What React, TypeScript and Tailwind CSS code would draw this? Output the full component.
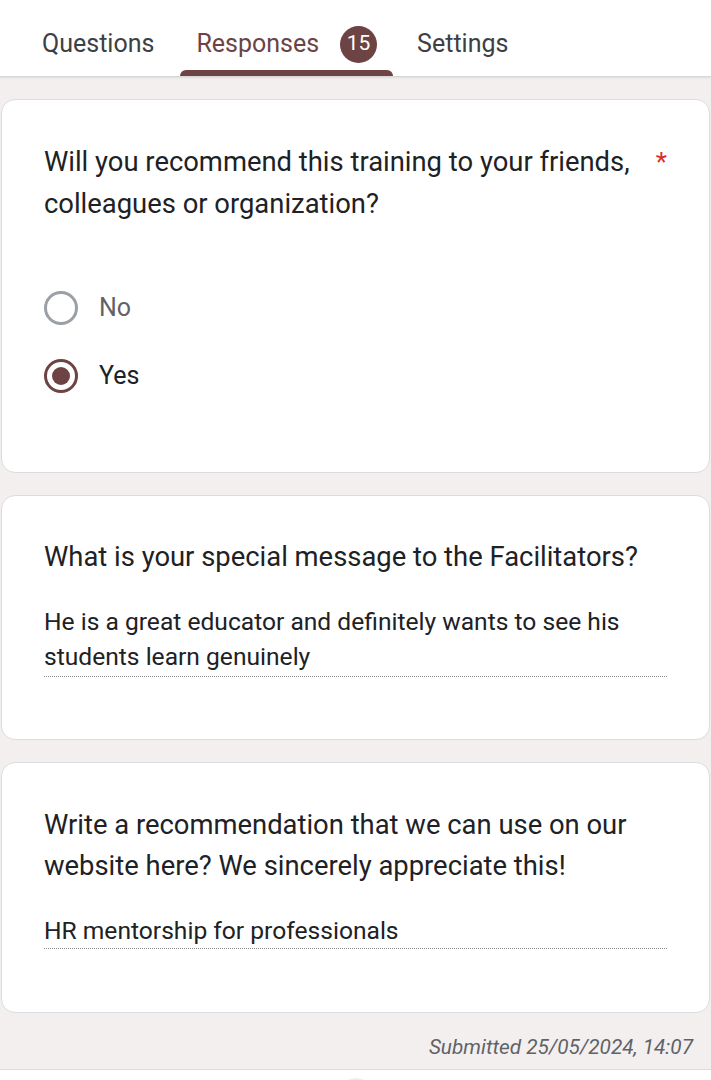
import React from "react";

const Radio = ({ label, checked }: { label: string; checked?: boolean }) => (
  <div className="flex items-center gap-[21px] h-[34px]">
    {checked ? (
      <div className="w-[34px] h-[34px] rounded-full border-[3px] border-[#6d4343] flex items-center justify-center">
        <div className="w-[18px] h-[18px] rounded-full bg-[#6d4343]" />
      </div>
    ) : (
      <div className="w-[34px] h-[34px] rounded-full border-[3px] border-[#9aa0a6]" />
    )}
    <span className={`text-[25px] ${checked ? "text-[#202124]" : "text-[#5f6368]"}`}>{label}</span>
  </div>
);

const Card = ({ children, className }: { children: React.ReactNode; className: string }) => (
  <div className={`bg-white mx-[1px] rounded-[14px] border border-[#dadce0] px-[42px] ${className}`}>
    {children}
  </div>
);

export default function App() {
  return (
    <div className="min-h-[1080px] bg-[#f4efef] font-['Roboto',sans-serif] text-[#202124]">
      {/* tabs */}
      <div className="bg-white h-[77px] border-b border-[#d6d6d6] pl-[42px] shadow-[0_1px_2px_rgba(0,0,0,0.08)]">
        <div className="flex items-center h-[76px]">
          <div className="text-[25px] text-[#3c4043] pt-[12px]">Questions</div>
          <div className="relative h-full flex items-center ml-[26px] px-[16px] pt-[12px]">
            <span className="text-[25px] text-[#6d4343]">Responses</span>
            <span className="ml-[21px] w-[37px] h-[37px] rounded-full bg-[#6d4343] text-white text-[21px] flex items-center justify-center">15</span>
            <div className="absolute left-0 right-0 bottom-0 h-[6px] bg-[#6d4343] rounded-t-[6px]" />
          </div>
          <div className="text-[25px] text-[#3c4043] ml-[24px] pt-[12px]">Settings</div>
        </div>
      </div>

      <div className="pt-[22px] flex flex-col gap-[22px]">
        <Card className="h-[374px] pt-[41px]">
          <div className="flex justify-between">
            <div className="text-[27.4px] leading-[42px] w-[600px]">
              Will you recommend this training to your friends, colleagues or organization?
            </div>
            <span className="text-[#d93025] text-[26px] leading-[42px]">*</span>
          </div>
          <div className="mt-[66px] flex flex-col gap-[34px]">
            <Radio label="No" />
            <Radio label="Yes" checked />
          </div>
        </Card>

        <Card className="h-[245px] pt-[40px]">
          <div className="text-[27.4px] leading-[42px]">What is your special message to the Facilitators?</div>
          <div className="mt-[26px] text-[24.6px] leading-[35px] pb-[2px] border-b border-dotted border-[#8a8a8a]">
            He is a great educator and definitely wants to see his students learn genuinely
          </div>
        </Card>

        <Card className="h-[251px] pt-[42px]">
          <div className="text-[27.4px] leading-[41px]">
            Write a recommendation that we can use on our website here? We sincerely appreciate this!
          </div>
          <div className="mt-[26px] text-[24.6px] leading-[35px] border-b border-dotted border-[#8a8a8a]">
            HR mentorship for professionals
          </div>
        </Card>
      </div>

      <div className="h-[56px] flex items-center justify-end pr-[18px] pt-[14px] text-[20.8px] italic text-[#5f6368]">
        Submitted 25/05/2024, 14:07
      </div>
      <div className="bg-white border-t border-[#dcdcdc] h-[20px] flex justify-center overflow-hidden">
        <div className="w-[40px] h-[40px] rounded-full bg-[#eeeeee] mt-[8px]" />
      </div>
    </div>
  );
}
